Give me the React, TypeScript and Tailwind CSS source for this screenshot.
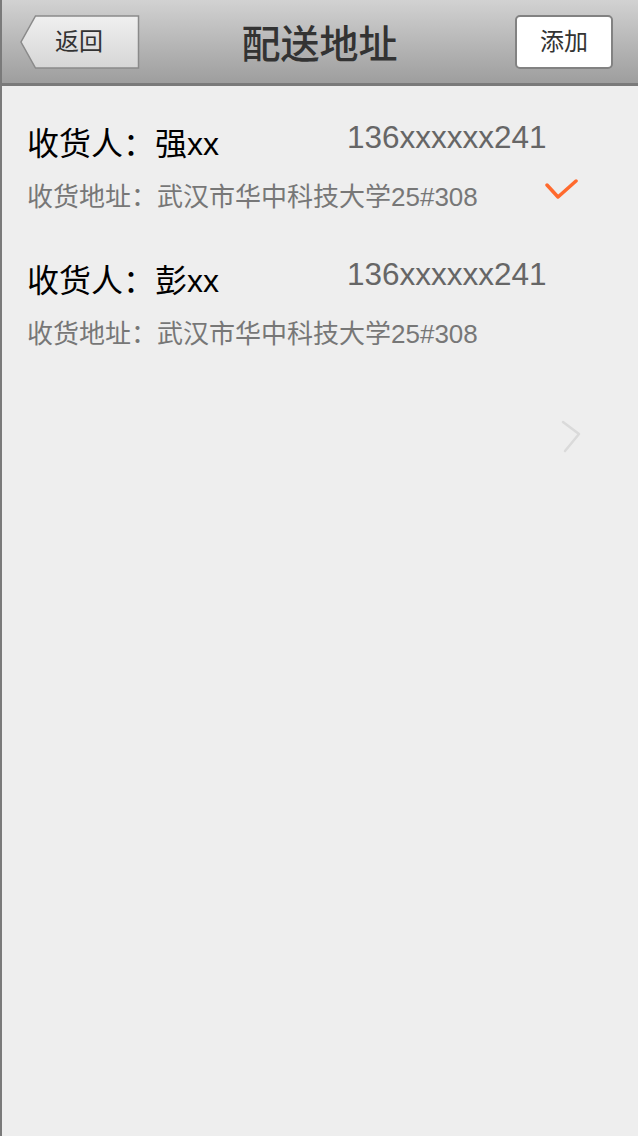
import type { ReactNode } from 'react'

type Address = {
  name: string
  phone: string
  detail: string
  selected?: boolean
}

const ADDRESSES: Address[] = [
  { name: '强xx', phone: '136xxxxxx241', detail: '武汉市华中科技大学25#308', selected: true },
  { name: '彭xx', phone: '136xxxxxx241', detail: '武汉市华中科技大学25#308' },
]

const cjk = "font-['Liberation_Sans','Noto_Sans_CJK_SC',sans-serif]"

const BackButton = ({ children }: { children: ReactNode }) => (
  <button className="relative flex h-[54px] w-[120px] items-center pl-[35px]">
    <svg className="absolute inset-0" width="120" height="54" viewBox="0 0 120 54">
      <defs>
        <linearGradient id="back" x1="0" y1="0" x2="0" y2="1">
          <stop offset="0" stopColor="#f0f0f0" />
          <stop offset="1" stopColor="#d6d6d6" />
        </linearGradient>
      </defs>
      <path
        d="M15.5 1 H118.5 V53 H15.5 L1 27 Z"
        fill="url(#back)"
        stroke="#8a8a8a"
        strokeWidth="1.5"
      />
    </svg>
    <span className="relative text-[24px] leading-none text-[#333]">{children}</span>
  </button>
)

const Check = () => (
  <svg width="40" height="26" viewBox="0 0 40 26" className="-mt-[10px]">
    <path
      d="M4 6 L15 18 L33 2"
      fill="none"
      stroke="#ff6a2e"
      strokeWidth="3.5"
      strokeLinecap="round"
      strokeLinejoin="round"
    />
  </svg>
)

const AddressItem = ({ name, phone, detail, selected }: Address) => (
  <div className="flex flex-col">
    <div className="flex items-start">
      <p className="mt-[7px] w-[320px] text-[32px] leading-[40px] text-black">收货人：{name}</p>
      <p className="text-[31.5px] leading-[40px] text-[#666]">{phone}</p>
    </div>
    <div className="mt-[13px] flex items-center">
      <p className="w-[516px] text-[26px] leading-[40px] text-[#777]">收货地址：{detail}</p>
      {selected && <Check />}
    </div>
  </div>
)

export default function App() {
  return (
    <div className={`flex min-h-[1136px] flex-col border-l-2 border-[#7a7a7a] bg-[#eeeeee] ${cjk}`}>
      <header className="grid h-[86px] grid-cols-[1fr_auto_1fr] items-center border-b-[3px] border-[#7a7a7a] bg-gradient-to-b from-[#d2d2d2] to-[#9e9e9e] pr-[25px] pl-[18px]">
        <div className="flex">
          <BackButton>返回</BackButton>
        </div>
        <h1 className="mt-[6px] ml-[6px] text-[39px] font-medium leading-none text-[#333]">配送地址</h1>
        <div className="flex justify-end">
          <button className="flex h-[54px] w-[98px] items-center justify-center rounded-[5px] border-2 border-[#828282] bg-white text-[24px] leading-none text-[#333]">
            添加
          </button>
        </div>
      </header>

      <main className="flex flex-col gap-[37px] pt-[31px] pl-[25px]">
        {ADDRESSES.map((a) => (
          <AddressItem key={a.name} {...a} />
        ))}
      </main>

      <div className="mt-[66px] flex justify-end pr-[54px]">
        <svg width="24" height="34" viewBox="0 0 24 34">
          <path
            d="M3 2 L19 14 L5 31"
            fill="none"
            stroke="#dadada"
            strokeWidth="2.5"
            strokeLinecap="round"
            strokeLinejoin="round"
          />
        </svg>
      </div>
    </div>
  )
}
